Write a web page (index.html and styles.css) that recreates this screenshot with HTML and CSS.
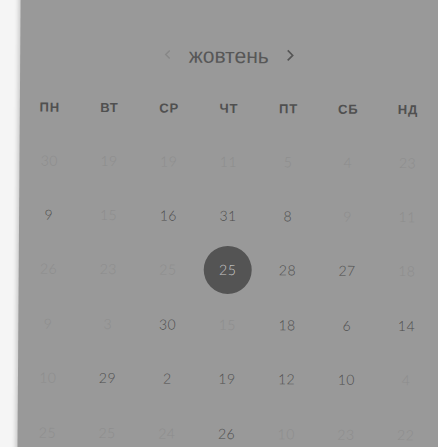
FILE: index.html
```html
<!DOCTYPE html>
<html lang="uk">
<head>
<meta charset="utf-8">
<link rel="stylesheet" href="styles.css">
</head>
<body>
<div class="frame">
<div class="panel">
  <div class="month">
    <span class="nav nav-prev"><svg width="7" height="10" viewBox="0 0 7 10"><polyline points="5.5,1 1.5,5 5.5,9" fill="none" stroke="currentColor" stroke-width="1.4"/></svg></span>
    <span class="month-name">жовтень</span>
    <span class="nav nav-next"><svg width="8" height="12" viewBox="0 0 8 12"><polyline points="1.5,1 6.5,6 1.5,11" fill="none" stroke="currentColor" stroke-width="1.6"/></svg></span>
  </div>
  <div class="weekdays">
    <span>пн</span><span>вт</span><span>ср</span><span>чт</span><span>пт</span><span>сб</span><span>нд</span>
  </div>
  <div class="days">
    <span class="day off">30</span><span class="day off">19</span><span class="day off">19</span><span class="day off">11</span><span class="day off">5</span><span class="day off">4</span><span class="day off">23</span>
    <span class="day">9</span><span class="day off">15</span><span class="day">16</span><span class="day">31</span><span class="day">8</span><span class="day off">9</span><span class="day off">11</span>
    <span class="day off">26</span><span class="day off">23</span><span class="day off">25</span><span class="day selected"><span class="dot">25</span></span><span class="day">28</span><span class="day">27</span><span class="day off">18</span>
    <span class="day off">9</span><span class="day off">3</span><span class="day">30</span><span class="day off">15</span><span class="day">18</span><span class="day">6</span><span class="day">14</span>
    <span class="day off">10</span><span class="day">29</span><span class="day">2</span><span class="day">19</span><span class="day">12</span><span class="day">10</span><span class="day off">4</span>
    <span class="day off">25</span><span class="day off">25</span><span class="day off">24</span><span class="day">26</span><span class="day off">10</span><span class="day off">23</span><span class="day off">22</span>
  </div>
</div>
</div>
</body>
</html>
```
FILE: styles.css
```css
html, body {
  margin: 0;
  padding: 0;
}
body {
  background: #f5f5f5;
  font-family: "Lato", "Open Sans", sans-serif;
}
.frame {
  width: 438px;
  height: 447px;
  overflow: hidden;
}
.panel {
  margin-left: 19px;
  margin-top: -10px;
  width: 440px;
  height: 480px;
  background: #999999;
  box-shadow: -2px 0 4px rgba(0, 0, 0, 0.18);
  transform: rotate(0.4deg);
  padding-top: 50px;
  box-sizing: border-box;
}
.month {
  width: 418px;
  height: 30px;
  display: flex;
  align-items: center;
  justify-content: center;
}
.nav {
  display: flex;
  align-items: center;
}
.nav-prev {
  color: #878787;
  margin-right: 17px;
}
.nav-next {
  color: #555555;
  margin-left: 17px;
}
.month-name {
  font-family: "Liberation Sans", Arial, sans-serif;
  font-size: 21px;
  color: #575757;
  line-height: 30px;
  position: relative;
  top: 1px;
}
.weekdays {
  width: 418px;
  margin-top: 26px;
  display: grid;
  grid-template-columns: repeat(7, 1fr);
  height: 24px;
  align-items: center;
}
.weekdays span {
  text-align: center;
  text-transform: uppercase;
  font-family: "Liberation Sans", Arial, sans-serif;
  font-weight: bold;
  font-size: 13px;
  letter-spacing: 0.8px;
  color: #505050;
}
.days {
  width: 418px;
  margin-top: 14px;
  display: grid;
  grid-template-columns: repeat(7, 1fr);
  grid-auto-rows: 54.4px;
}
.day {
  display: flex;
  align-items: center;
  justify-content: center;
  font-size: 14px;
  font-weight: 300;
  color: #4e4e4e;
  letter-spacing: 0.5px;
}
.day.off {
  color: #8d8d8d;
}
.dot {
  width: 48px;
  height: 48px;
  border-radius: 50%;
  background: #545454;
  color: #c8c8c8;
  display: flex;
  align-items: center;
  justify-content: center;
}
```
